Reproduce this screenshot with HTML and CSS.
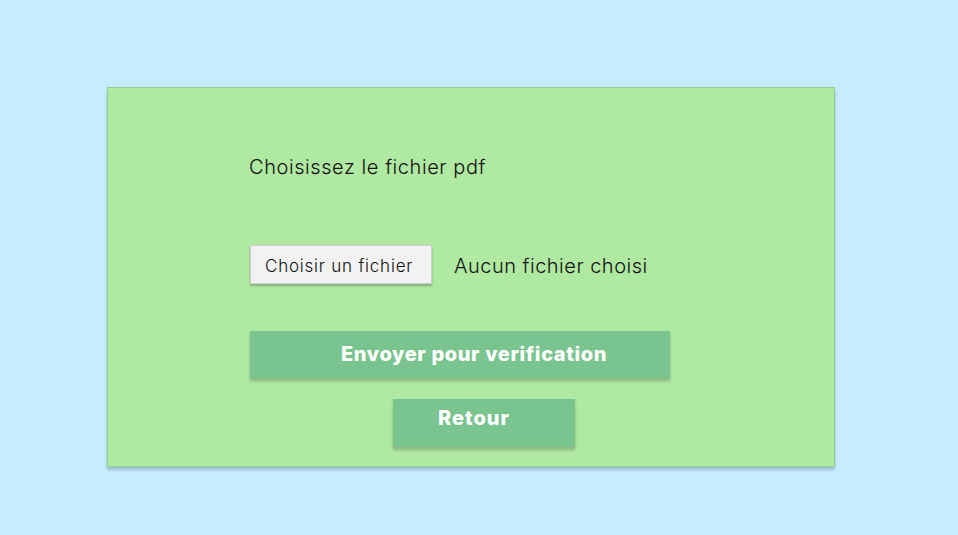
FILE: index.html
```html
<!DOCTYPE html>
<html lang="fr">
<head>
<meta charset="utf-8">
<title>Vérification</title>
<link rel="stylesheet" href="styles.css">
</head>
<body>
<main class="page">
  <section class="card">
    <p class="title">Choisissez le fichier pdf</p>
    <div class="file-row">
      <button class="file-btn" type="button">Choisir un fichier</button>
      <span class="file-name">Aucun fichier choisi</span>
    </div>
    <button class="action send" type="button"><span>Envoyer pour verification</span></button>
    <button class="action back" type="button"><span>Retour</span></button>
  </section>
</main>
</body>
</html>
```
FILE: styles.css
```css
html, body {
  margin: 0;
  padding: 0;
  height: 100%;
}
body {
  background: #c6ecfd;
  font-family: Inter, "Noto Sans", sans-serif;
  color: #111111;
}
.page {
  padding: 87px 0 0 107px;
}
.card {
  box-sizing: border-box;
  width: 728px;
  height: 380px;
  background: #b0e9a2;
  border: 1px solid #8fcf98;
  box-shadow: 0 3px 3px rgba(0, 0, 0, 0.2);
  padding: 64px 0 0 141px;
  display: flex;
  flex-direction: column;
  align-items: flex-start;
}
.title {
  margin: 0;
  font-size: 20px;
  font-weight: 300;
  letter-spacing: 0.57px;
  line-height: 30px;
}
.file-row {
  margin-top: 63px;
  display: flex;
  align-items: center;
  gap: 22px;
}
.file-btn {
  box-sizing: border-box;
  width: 182px;
  height: 39px;
  margin-left: 1px;
  background: #f2f2f2;
  border: 1px solid #cfcfcf;
  box-shadow: 0 2px 2px rgba(0, 0, 0, 0.25);
  font-family: Inter, "Noto Sans", sans-serif;
  font-size: 17px;
  font-weight: 300;
  letter-spacing: 0.78px;
  color: #111111;
  padding: 3px 0 0 14px;
  text-align: left;
}
.file-name {
  font-size: 20px;
  font-weight: 300;
  letter-spacing: 0.5px;
  padding-top: 3px;
}
.action {
  box-sizing: border-box;
  border: none;
  background: #7ac48f;
  box-shadow: 0 3px 3px rgba(0, 0, 0, 0.22);
  color: #ffffff;
  font-family: Inter, "Noto Sans", sans-serif;
  font-weight: 800;
  font-size: 20px;
  letter-spacing: 0.63px;
  padding: 0;
  display: flex;
  justify-content: flex-start;
}
.send {
  margin-top: 47px;
  margin-left: 1px;
  width: 420px;
  height: 47px;
  align-items: center;
  padding-left: 91px;
  padding-bottom: 1px;
}
.back {
  margin-top: 21px;
  margin-left: 144px;
  width: 182px;
  height: 48px;
  align-items: flex-start;
  padding-top: 7px;
  padding-left: 45px;
  letter-spacing: 1px;
}
```
